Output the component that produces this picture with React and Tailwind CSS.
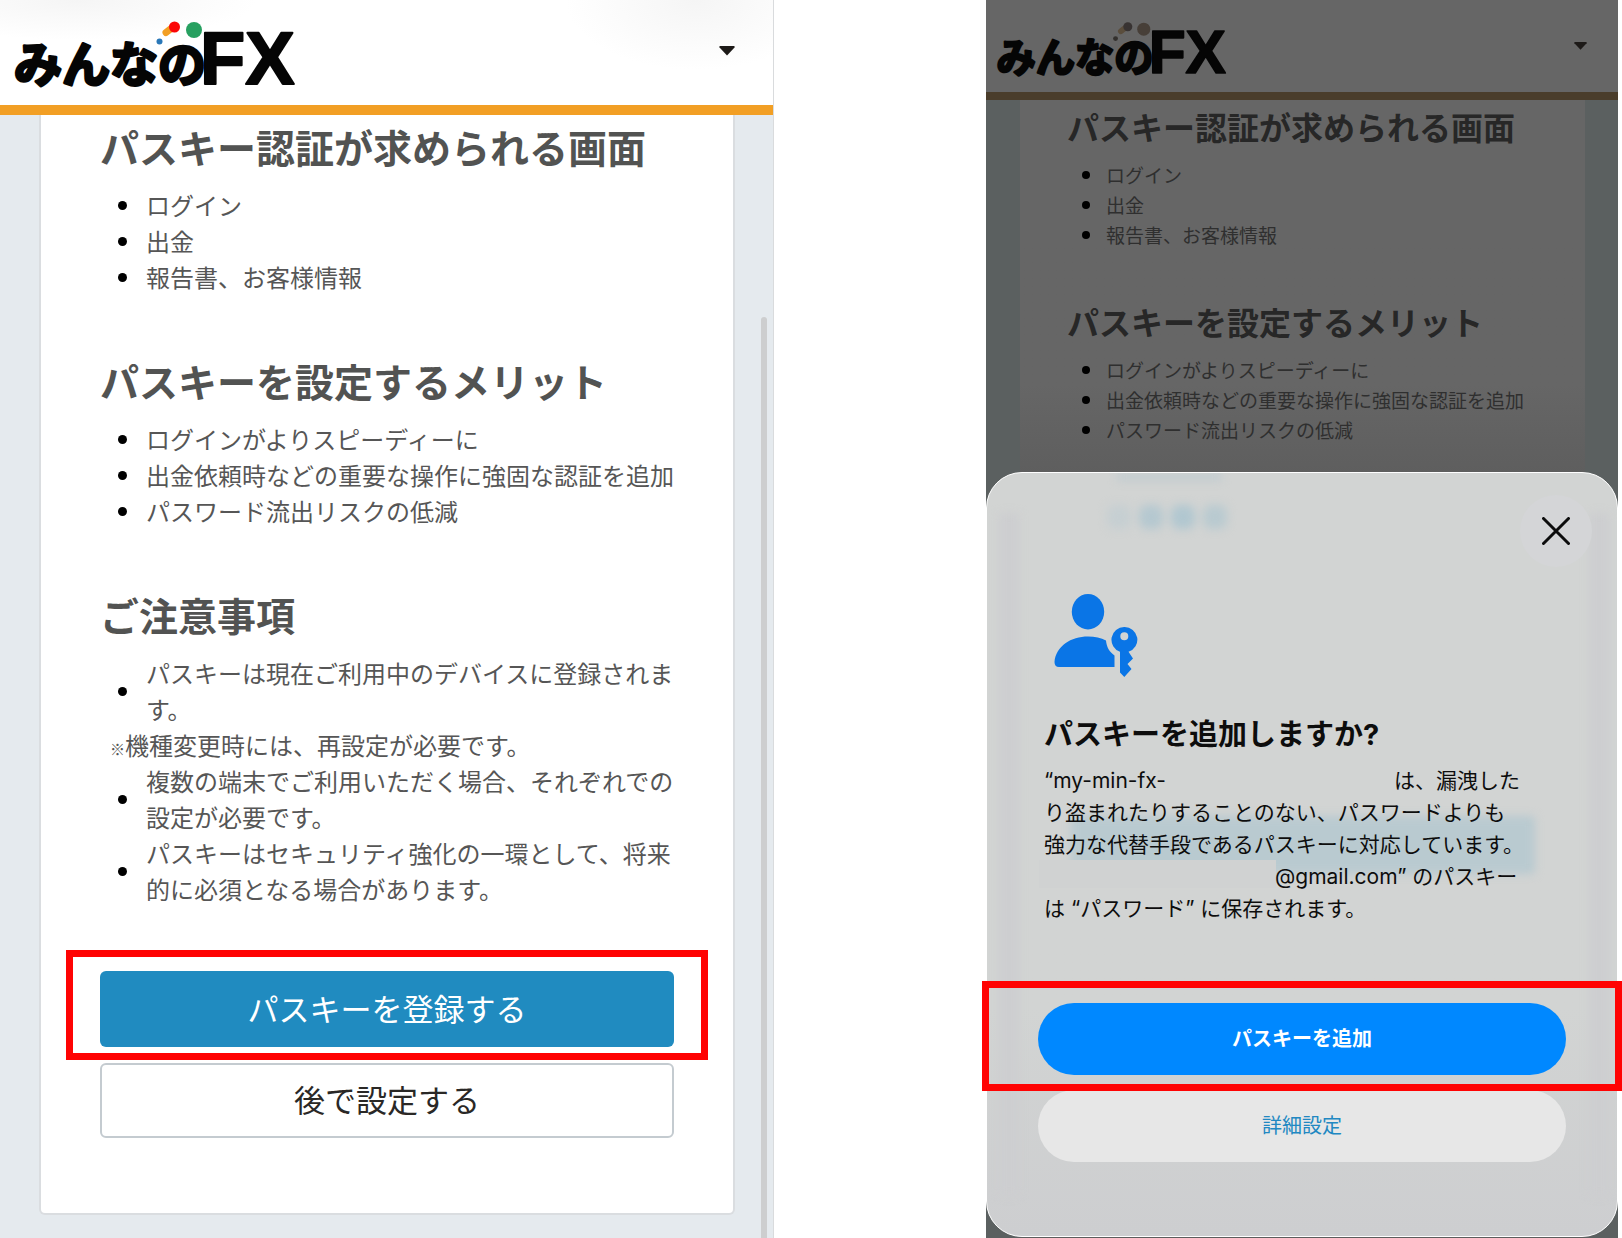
import React from 'react';

const sections = [
  {
    title: 'パスキー認証が求められる画面',
    items: [{ text: 'ログイン' }, { text: '出金' }, { text: '報告書、お客様情報' }]
  },
  {
    title: 'パスキーを設定するメリット',
    items: [
      { text: 'ログインがよりスピーディーに' },
      { text: '出金依頼時などの重要な操作に強固な認証を追加' },
      { text: 'パスワード流出リスクの低減' }
    ]
  },
  {
    title: 'ご注意事項',
    items: [
      { text: 'パスキーは現在ご利用中のデバイスに登録されます。' },
      { text: '機種変更時には、再設定が必要です。', note: true },
      { text: '複数の端末でご利用いただく場合、それぞれでの設定が必要です。' },
      { text: 'パスキーはセキュリティ強化の一環として、将来的に必須となる場合があります。' }
    ]
  }
];

const Logo = ({ dimmed, className }) => (
  <svg viewBox="0 0 280 68" className={`overflow-visible ${className}`} role="img" aria-label="みんなのFX">
    <g fill="#050505" stroke="#050505" strokeLinejoin="round">
      <text
        x="-3"
        y="62"
        fontSize="48"
        fontWeight="700"
        strokeWidth="3"
        fontFamily="'Noto Sans CJK JP', sans-serif"
      >
        みんなの
      </text>
      <text
        x="183"
        y="64"
        fontSize="74"
        fontWeight="700"
        strokeWidth="2"
        fontFamily="'Liberation Sans', sans-serif"
      >
        FX
      </text>
    </g>
    <path
      d="M149 12.5L156 7"
      stroke={dimmed ? '#5a4d3c' : '#f29f24'}
      strokeWidth="7"
      strokeLinecap="round"
    />
    <circle cx="157.5" cy="7" r="5.5" fill={dimmed ? '#383332' : '#fb0606'} />
    <circle cx="177" cy="10" r="8" fill={dimmed ? '#473f38' : '#27a060'} />
    <circle cx="142.5" cy="21.5" r="3" fill={dimmed ? '#33302d' : '#2a78b8'} />
  </svg>
);

const MenuCaret = ({ className }) => (
  <button type="button" aria-label="メニュー" className={className}>
    <svg viewBox="0 0 16 10" className="w-full" fill="#1d1a18">
      <path d="M0.5 0H15.5V1.5L8 9.5L0.5 1.5Z" />
    </svg>
  </button>
);

const Highlight = ({ className }) => (
  <div className={`absolute z-10 border-[7px] border-[#ff0303] pointer-events-none ${className}`} />
);

const RegisterScreen = () => (
  <div className="relative flex flex-col border-r border-[#d9dbdd] bg-[#e5eaee]">
    <header className="flex h-[115px] items-start justify-between border-b-[10px] border-[#f29f24] bg-white bg-[radial-gradient(ellipse_180px_40px_at_10%_0%,#f5f5f5,transparent),radial-gradient(ellipse_130px_70px_at_90%_0%,#f5f5f5,transparent)] pt-5 pr-[38px] pl-[17px]">
      <Logo className="w-[280px]" />
      <MenuCaret className="mt-[26px] w-4" />
    </header>

    <main className="mr-[38px] mb-[23px] ml-[39px] rounded-b-md border-2 border-t-0 border-[#dadde0] bg-white px-[59px] pt-[2px] pb-[75px]">
      {sections.map((section) => (
        <section key={section.title} className="mb-14">
          <h2 className="mb-[11px] text-[39px] leading-[59px] font-bold whitespace-nowrap text-[#525352]">
            {section.title}
          </h2>
          <ul className="-mr-2 text-[24px] leading-[36px] text-[#565656]">
            {section.items.map((item) =>
              item.note ? (
                <li key={item.text} className="ml-[10px]">
                  <span className="text-[15px] leading-none">※</span>
                  {item.text}
                </li>
              ) : (
                <li key={item.text} className="ml-[18px] flex items-center gap-[19px]">
                  <span className="size-[9px] shrink-0 rounded-full bg-black" />
                  <span>{item.text}</span>
                </li>
              )
            )}
          </ul>
        </section>
      ))}

      <div className="flex flex-col gap-4 pt-2 text-[31px]">
        <div className="relative">
          <Highlight className="-inset-x-[34px] -top-[21px] -bottom-[13px]" />
          <button type="button" className="h-[76px] w-full rounded-md bg-[#208bc0] pb-[2px] text-white">
            パスキーを登録する
          </button>
        </div>
        <button
          type="button"
          className="h-[75px] w-full rounded-md border-2 border-[#c4cbd0] bg-white pb-[2px] text-[#2a2826]"
        >
          後で設定する
        </button>
      </div>
    </main>

    {/* scroll thumb */}
    <div className="absolute top-[317px] right-[6px] bottom-0 w-[6px] rounded-t-full bg-[#cdcecf]" />
  </div>
);

const PasskeyIcon = () => (
  <svg viewBox="0 0 84 84" className="size-[84px]" fill="#0a75e6">
    <ellipse cx="34" cy="17.7" rx="16.2" ry="17.7" />
    <path d="M5 73Q0.5 73 0.5 68C2 52 17 42.5 34 42.5C41 42.5 47 44 52 46.5C52.5 53 55.5 58 60.5 61.5V73Z" />
    <path
      fillRule="evenodd"
      d="M70.3 33A12.700 12.700 0 0 1 74.500 57.800L79 64.500L73.500 70L77.500 75L70.300 83L66 78.500V57.700A12.700 12.700 0 0 1 70.300 33ZM70.300 38.200A4 4 0 1 0 70.300 46.200A4 4 0 1 0 70.300 38.200Z"
    />
  </svg>
);

// page colours showing through the frosted sheet
const SheetBackdrop = () => (
  <div className="absolute inset-0 overflow-hidden rounded-[35px]">
    <div className="absolute top-[32px] left-[120px] flex gap-2 blur-[5px]">
      <span className="size-6 rounded-lg bg-[#c6cfd2]" />
      <span className="size-6 rounded-lg bg-[#b5c8d0]" />
      <span className="size-6 rounded-lg bg-[#b1c7d0]" />
      <span className="size-6 rounded-lg bg-[#b9cad0]" />
    </div>
    <div className="absolute top-0 left-[130px] h-2 w-[105px] bg-[#c2ccd0] blur-[4px]" />
    <div className="absolute inset-y-10 left-[12px] w-5 bg-[#cdced0] blur-[4px]" />
    <div className="absolute inset-y-10 right-[8px] w-5 bg-[#cdced0] blur-[4px]" />
    <div className="absolute top-[343px] right-[82px] left-[84px] h-[58px] rounded bg-[#b9cad0] blur-[4px]" />
    <div className="absolute top-[387px] left-[52px] h-[28px] w-[237px] bg-[#d0d2d2]" />
  </div>
);

const PasskeySheet = () => (
  <div
    role="dialog"
    aria-labelledby="sheet-title"
    className="absolute inset-x-0 bottom-px rounded-[36px] border border-white bg-[#d1d3d3] bg-linear-to-b from-[#d2d4d3] from-70% to-[#cdced0] px-[51px] pt-[22px] pb-[74px] font-['Inter','Noto_Sans_CJK_JP',sans-serif]"
  >
    <SheetBackdrop />

    <div className="relative">
      <div className="-mr-[26px] flex justify-end">
        <button
          type="button"
          aria-label="閉じる"
          className="flex size-[72px] items-center justify-center rounded-full bg-[#d4d5d7]"
        >
          <svg viewBox="0 0 28 28" className="size-7" stroke="#0c0c0c" strokeWidth="3" strokeLinecap="round">
            <path d="M1.5 1.5L26.5 26.5M26.5 1.5L1.5 26.5" />
          </svg>
        </button>
      </div>

      <div className="mt-[27px] ml-4">
        <PasskeyIcon />
      </div>

      <div className="ml-[6px] whitespace-nowrap text-[#0d0d0d]">
        <h2 id="sheet-title" className="mt-[37px] text-[29px] leading-[40px] font-bold">
          パスキーを追加しますか?
        </h2>
        <p className="mt-[10px] text-[21px] leading-[32px]">
          “my-min-fx-
          <span className="inline-block w-[228px]" />
          は、漏洩した
          <br />
          り盗まれたりすることのない、パスワードよりも
          <br />
          強力な代替手段であるパスキーに対応しています。
          <br />
          <span className="inline-block w-[231px]" />
          @gmail.com” のパスキー
          <br />は “パスワード” に保存されます。
        </p>
      </div>

      <div className="mt-[78px] flex flex-col gap-[15px] text-[20px]">
        <div className="relative">
          <Highlight className="-inset-x-[56px] -top-[22px] -bottom-[16px]" />
          <button type="button" className="h-[72px] w-full rounded-full bg-[#0088ff] font-bold text-white">
            パスキーを追加
          </button>
        </div>
        <button type="button" className="h-[72px] w-full rounded-full bg-[#e7e7e7] text-[#2188c2]">
          詳細設定
        </button>
      </div>
    </div>
  </div>
);

const ConfirmScreen = () => (
  <div className="relative flex flex-col bg-[#5b6060]">
    <header className="flex h-[100px] items-start justify-between border-b-8 border-[#4a3d2b] bg-[#666666] pt-[21px] pr-[31px] pl-[13px]">
      <Logo dimmed className="w-[229px]" />
      <MenuCaret className="mt-[21px] w-[13px]" />
    </header>

    <div className="mr-[33px] ml-[34px] grow bg-[#666666] bg-linear-to-b from-[#666666] from-25% to-[#5c5c5c] to-35% pt-[2px] pl-[47px]">
      {sections.slice(0, 2).map((section) => (
        <section key={section.title} className="mb-[47px]">
          <h2 className="mb-[9px] text-[32px] leading-[49px] font-bold whitespace-nowrap text-[#272727]">
            {section.title}
          </h2>
          <ul className="text-[19px] leading-[30px] text-[#2f2f2f]">
            {section.items.map((item) => (
              <li key={item.text} className="ml-[15px] flex items-center gap-4">
                <span className="size-2 shrink-0 rounded-full bg-black" />
                <span>{item.text}</span>
              </li>
            ))}
          </ul>
        </section>
      ))}
    </div>

    <PasskeySheet />
  </div>
);

const App = () => (
  <div
    lang="ja"
    className="grid min-h-screen grid-cols-[774fr_632fr] gap-x-[212px] overflow-hidden bg-white pr-1 font-['Noto_Sans_CJK_JP',sans-serif]"
  >
    <RegisterScreen />
    <ConfirmScreen />
  </div>
);

export default App;
